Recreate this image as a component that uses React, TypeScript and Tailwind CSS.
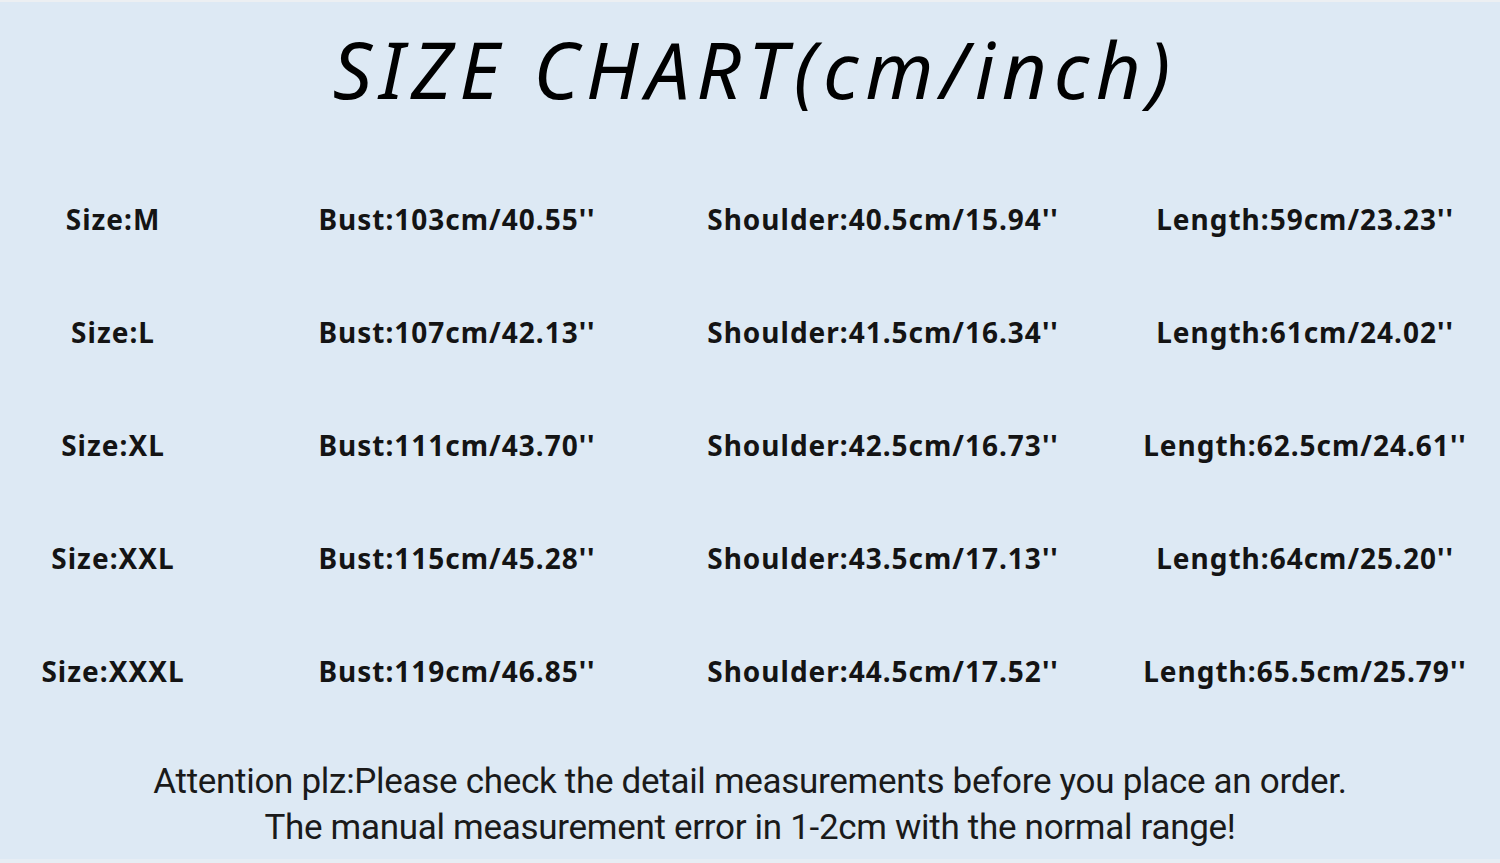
import React from "react";

const rows = [
  ["Size:M", "Bust:103cm/40.55''", "Shoulder:40.5cm/15.94''", "Length:59cm/23.23''"],
  ["Size:L", "Bust:107cm/42.13''", "Shoulder:41.5cm/16.34''", "Length:61cm/24.02''"],
  ["Size:XL", "Bust:111cm/43.70''", "Shoulder:42.5cm/16.73''", "Length:62.5cm/24.61''"],
  ["Size:XXL", "Bust:115cm/45.28''", "Shoulder:43.5cm/17.13''", "Length:64cm/25.20''"],
  ["Size:XXXL", "Bust:119cm/46.85''", "Shoulder:44.5cm/17.52''", "Length:65.5cm/25.79''"],
];

export default function App() {
  return (
    <div className="w-[1500px] h-[863px] bg-[#dde9f4] flex flex-col overflow-hidden text-[#141414] border-t-2 border-b-4 border-t-[#eceff2] border-b-[#e6edf4]">
      <div className="h-[140px] pb-[6px] pl-[10px] flex items-center justify-center">
        <h1 className="text-[78px] italic font-normal text-black tracking-[6.8px] leading-none [font-family:'Noto_Sans',sans-serif]">
          SIZE CHART(cm/inch)
        </h1>
      </div>
      <div className="mt-[20px] flex flex-col [font-family:'Noto_Sans',sans-serif] font-bold text-[28px] tracking-[1px]">
        {rows.map((r, i) => (
          <div key={i} className="h-[113px] grid grid-cols-[226px_462px_390px_1fr] items-center">
            <div className="text-center">{r[0]}</div>
            <div className="text-center">{r[1]}</div>
            <div className="text-center">{r[2]}</div>
            <div className="text-center pl-[32px]">{r[3]}</div>
          </div>
        ))}
      </div>
      <div className="mt-[32px] flex flex-col items-center [font-family:Roboto,sans-serif] text-[35px] leading-[46px] tracking-[-0.3px] text-[#1a1a1a]">
        <div>Attention plz:Please check the detail measurements before you place an order.</div>
        <div>The manual measurement error in 1-2cm with the normal range!</div>
      </div>
    </div>
  );
}
